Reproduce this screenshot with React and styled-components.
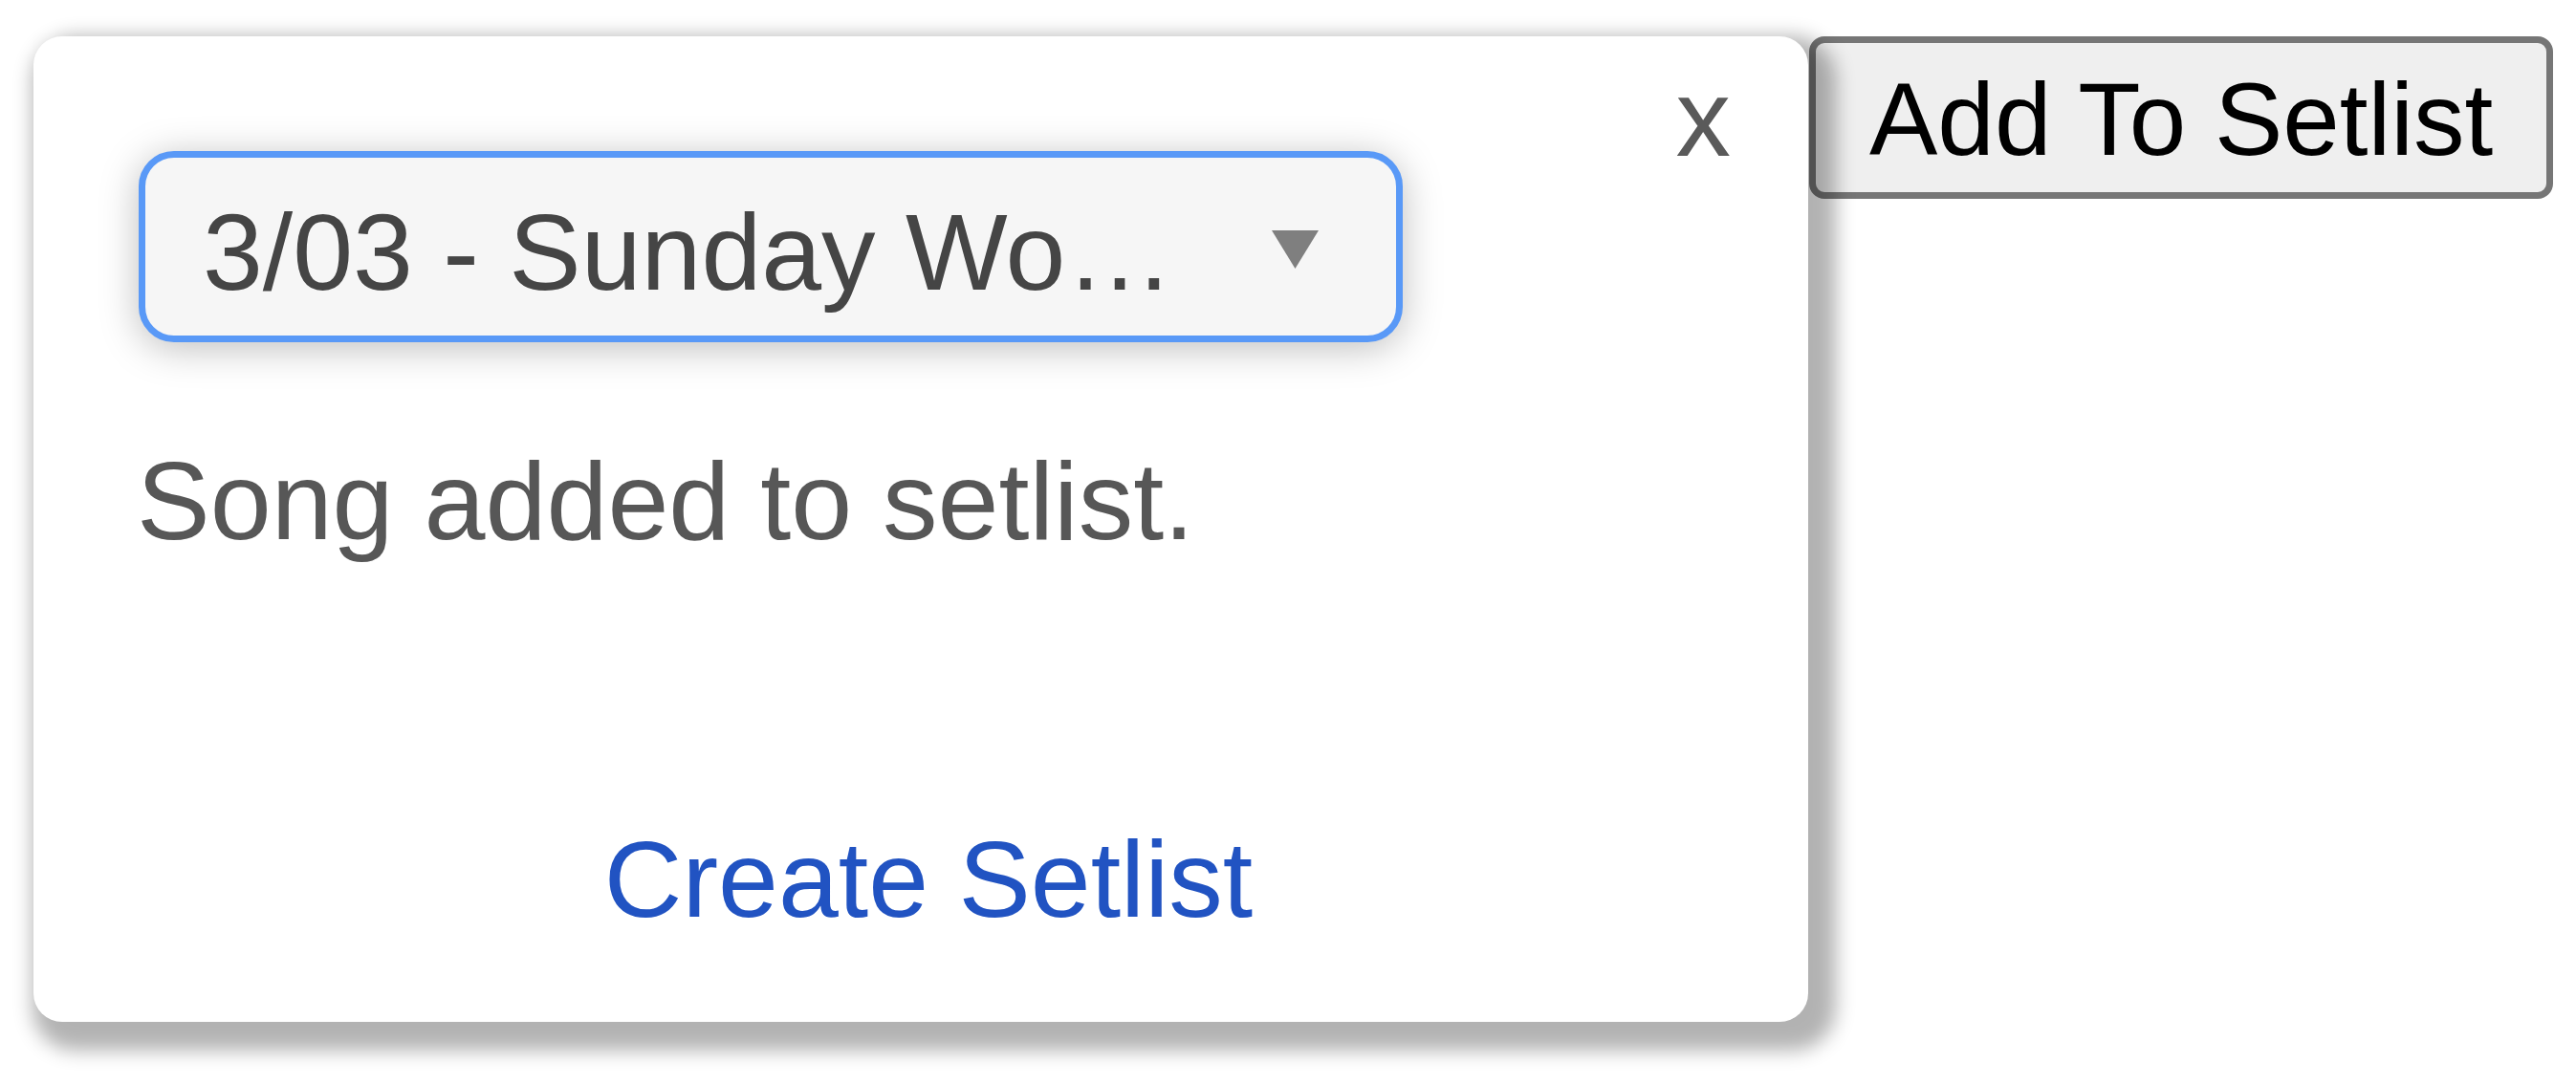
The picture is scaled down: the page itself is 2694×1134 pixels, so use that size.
import React from 'react'
import styled, { createGlobalStyle } from 'styled-components'

const GlobalStyle = createGlobalStyle`
  html, body {
    margin: 0;
    padding: 0;
    background: #ffffff;
    font-family: "Liberation Sans", Arial, sans-serif;
  }
`

const setlists = [{ id: 1, name: '3/03 - Sunday Worship' }]

const Caret = () => (
  <svg width="49" height="40" viewBox="0 0 49 40">
    <polygon points="0,0 49,0 24.5,40" fill="#7f7f7f" />
  </svg>
)

const SetlistSelect = ({ value }) => (
  <SelectBox>
    <SelectText>{value}</SelectText>
    <CaretSlot>
      <Caret />
    </CaretSlot>
  </SelectBox>
)

const App = () => (
  <>
    <GlobalStyle />
    <Page>
      <Card>
        <CloseButton>x</CloseButton>
        <SetlistSelect value={setlists[0].name} />
        <Message>Song added to setlist.</Message>
        <CreateLink>Create Setlist</CreateLink>
      </Card>
      <AddButton>Add To Setlist</AddButton>
    </Page>
  </>
)

export default App

const Page = styled.div`
  display: flex;
  align-items: flex-start;
  min-height: 100vh;
  box-sizing: border-box;
  padding: 38px 0 0 35px;
`

const Card = styled.div`
  position: relative;
  z-index: 1;
  box-sizing: border-box;
  width: 1856px;
  height: 1031px;
  display: flex;
  flex-direction: column;
  padding: 120px 92px 80px 108px;
  background: #ffffff;
  border-radius: 30px;
  box-shadow: 14px 15px 20px 15px rgba(0, 0, 0, 0.3);
`

const CloseButton = styled.span`
  position: absolute;
  top: 28px;
  right: 81px;
  font-size: 115px;
  line-height: 115px;
  color: #5a5a5a;
  cursor: pointer;
`

const SelectBox = styled.div`
  box-sizing: border-box;
  width: 1322px;
  height: 200px;
  margin-left: 2px;
  display: flex;
  align-items: flex-start;
  padding: 34px 0 0 60px;
  background: #f6f6f6;
  border: 7px solid #5999f7;
  border-radius: 37px;
  box-shadow: 0 6px 40px rgba(0, 0, 0, 0.26);
`

const SelectText = styled.span`
  width: 1035px;
  font-size: 113px;
  line-height: 130px;
  color: #454545;
  white-space: nowrap;
  overflow: hidden;
  text-overflow: ellipsis;
`

const CaretSlot = styled.span`
  display: flex;
  margin: 42px 0 0 auto;
  padding-right: 81px;
`

const Message = styled.p`
  margin: 97px 0 0;
  font-size: 115px;
  line-height: 138px;
  color: #575757;
`

const CreateLink = styled.a`
  margin-top: auto;
  align-self: center;
  font-size: 113px;
  line-height: 137px;
  color: #2153c2;
  cursor: pointer;
`

const AddButton = styled.button`
  box-sizing: border-box;
  height: 170px;
  margin-left: 1px;
  padding: 18px 56px 14px;
  font-family: "Liberation Sans", Arial, sans-serif;
  font-size: 107px;
  line-height: 124px;
  color: #000000;
  background: #efefef;
  border: 7px solid #767676;
  border-radius: 16px;
`
